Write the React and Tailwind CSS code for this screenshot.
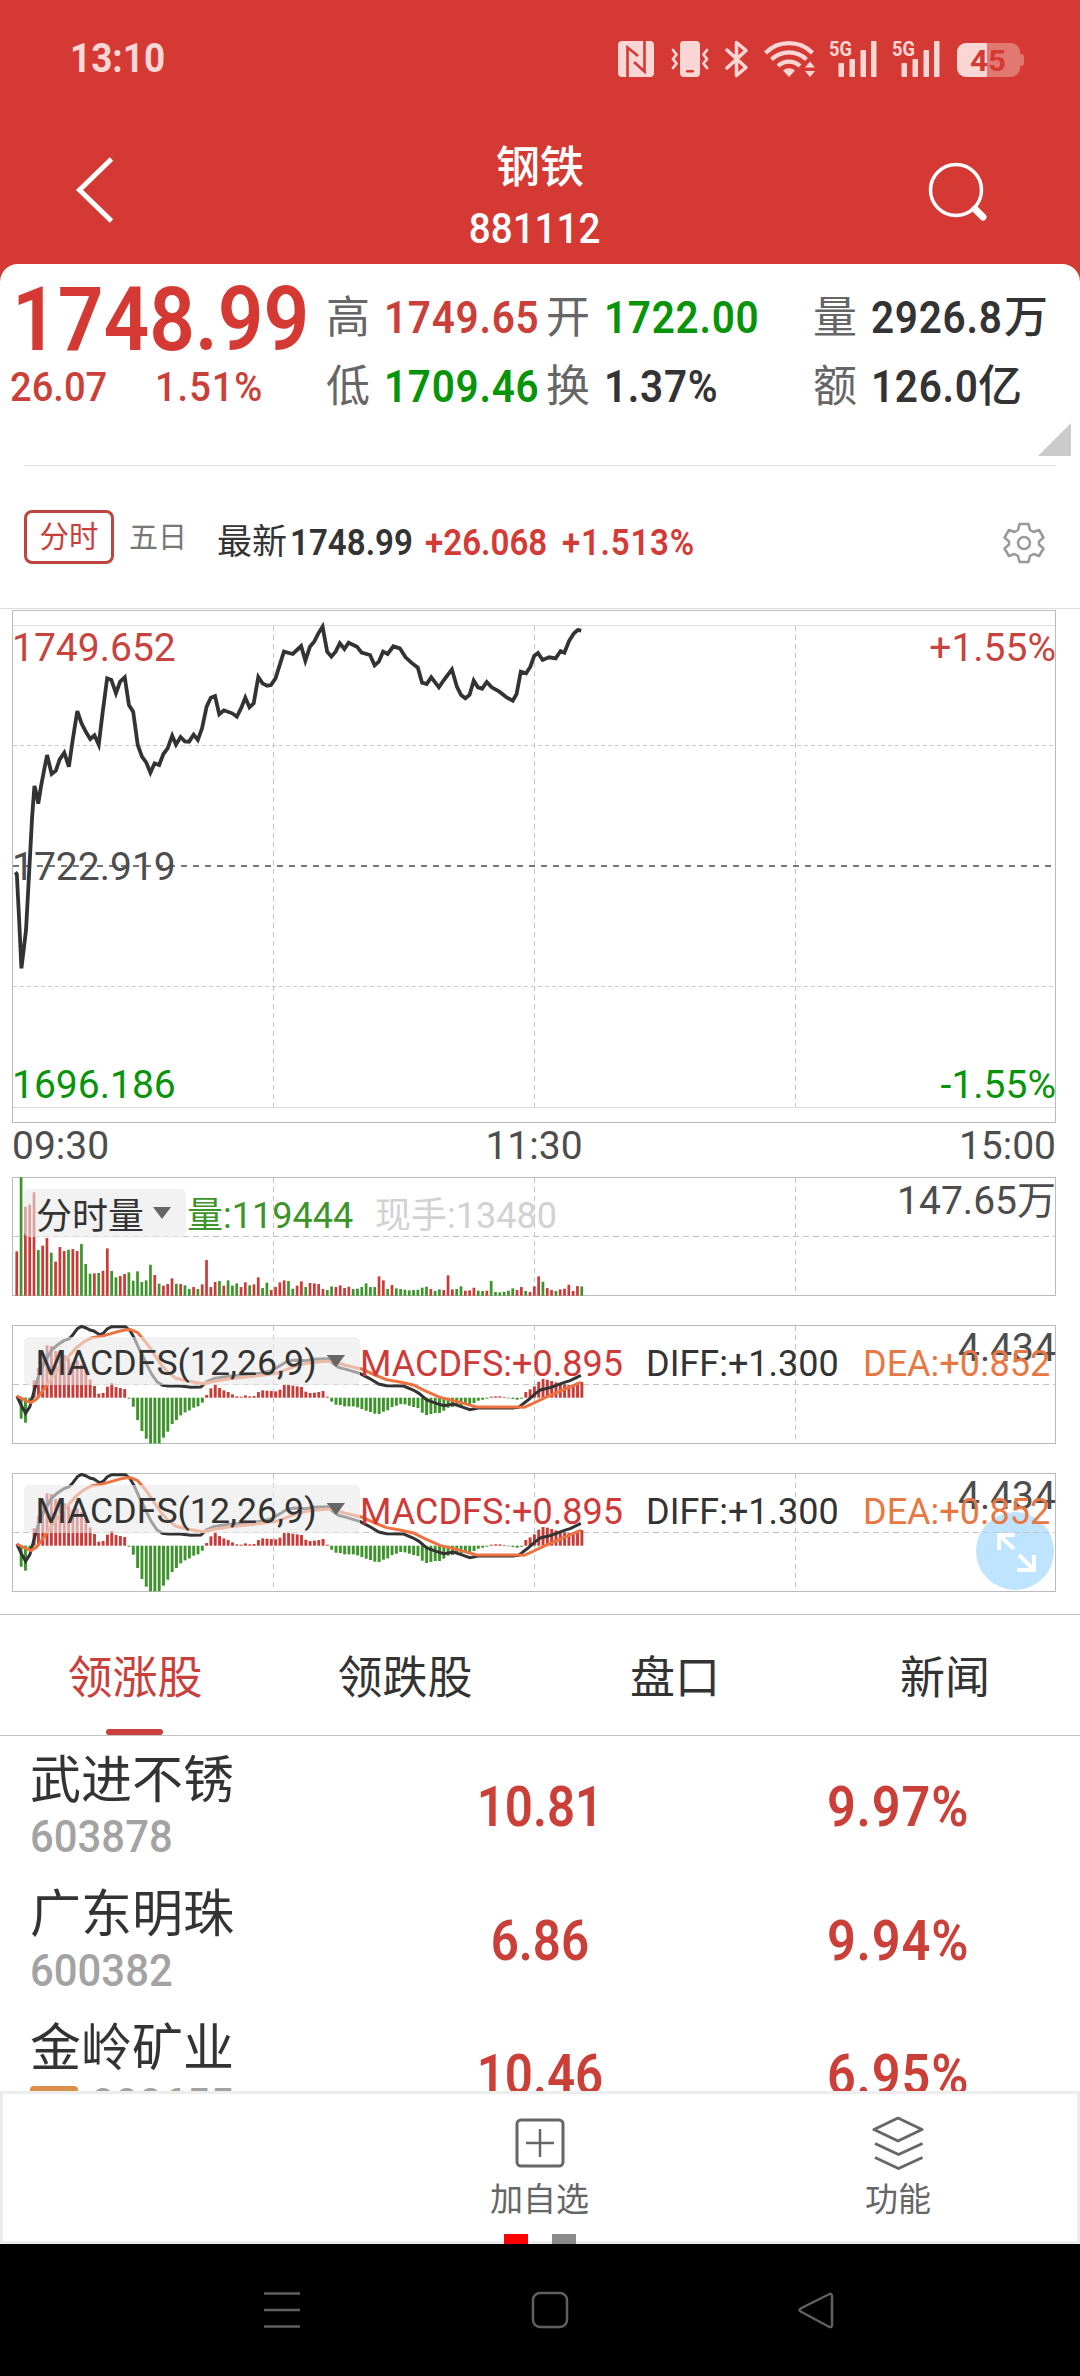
const RISE = "#cb3a37";
const FALL = "#3d942b";

// one bar per minute, negative = falling minute
const VOLUMES = [
  133, -355, 267, 273, 310, -137, 150, 173, -129, 102, 146, 134, -138, 140, 134, -155, -95, -66, 67, -68, 75, 142,
  -74, -55, 59, 65, -70, -45, -73, -41, -46, -93, 62, -36, 30, 35, 52, -36, 35, -31, -20, 26, -20, 34, 107, 26, 41,
  -44, 30, -46, -30, -37, 26, 40, -31, 34, 55, -23, -39, 17, 26, 40, 46, -44, -21, 30, 43, -26, 38, 37, 35, 20, -17,
  -28, 26, 31, 23, 27, -20, -21, -26, -37, -26, -26, 58, 46, -20, 32, -22, -20, -18, -16, -17, -18, -24, -27, 20,
  -14, -19, 17, 61, 19, -20, -28, 15, 16, 24, -15, -14, 15, -44, -11, -10, -12, -15, -22, 17, 26, -14, 11, 28, 58,
  -42, 23, 17, -14, 19, 21, 33, 14, 29, -28,
];

const HISTOGRAM = [
  0, -63, -75, -15, 52, 90, 125, 157, 155, 140, 135, 128, 118, 108, 112, 100, 85, 55, 35, 12, 14, 33, 44, 32, 29, 26,
  -3, -27, -67, -100, -123, -137, -137, -137, -120, -102, -79, -67, -53, -44, -38, -30, -26, -15, 8, 28, 39, 29, 22,
  17, 10, 4, 3, 7, 4, 5, 17, 22, 21, 20, 19, 24, 38, 38, 36, 34, 32, 18, 14, 15, 17, 20, 3, -12, -21, -22, -26, -26,
  -26, -29, -34, -39, -43, -48, -49, -42, -38, -28, -24, -19, -20, -24, -28, -31, -45, -52, -49, -46, -46, -39, -30,
  -28, -24, -24, -22, -20, -16, -9, -6, -3, 3, 4, 4, 2, -2, -4, -6, -3, 17, 25, 34, 48, 56, 54, 50, 46, 40, 40, 38,
  40, 45, 47,
];

const PRICE =
  "40,817 44,822 50,960 56,1105 68,990 76,820 84,650 90,558 95,580 100,611 107,560 123,465 135,522 146,512 156,478 168,458 180,500 190,420 202,333 213,370 225,397 236,417 247,406 258,434 268,340 280,235 291,240 303,280 314,245 326,232 337,315 348,335 360,435 371,470 382,487 393,518 404,490 416,495 427,462 438,445 450,407 460,434 472,411 483,424 494,425 506,404 517,420 528,385 540,320 551,293 562,288 573,343 585,331 607,340 619,350 630,325 641,293 652,322 663,310 675,231 686,250 698,257 708,255 720,235 742,155 765,162 776,150 787,138 798,182 810,140 821,125 832,100 843,80 855,155 866,170 877,155 888,130 900,147 911,128 933,140 945,158 967,165 979,196 990,185 1001,155 1013,162 1028,139 1045,145 1060,172 1075,188 1092,203 1103,248 1115,252 1127,232 1147,262 1160,240 1181,208 1194,260 1205,285 1216,295 1227,285 1238,242 1249,262 1260,266 1272,246 1285,262 1305,275 1325,293 1340,302 1350,282 1361,215 1375,220 1386,200 1396,168 1406,159 1418,180 1435,172 1452,175 1465,153 1475,158 1487,123 1500,100 1510,90 1519,92";

const DIFF =
  "44,708 55,735 67,760 78,740 90,690 100,650 115,610 135,570 150,555 167,542 180,537 190,525 203,505 213,499 225,504 235,510 245,513 260,524 270,520 280,507 292,500 328,500 340,512 350,532 365,570 380,605 395,640 410,665 425,676 440,678 470,678 500,682 525,681 540,665 560,655 590,650 610,647 650,645 680,640 710,632 735,615 750,604 770,600 800,602 820,598 855,596 870,610 885,622 905,628 940,640 965,655 990,672 1010,677 1055,678 1080,690 1095,700 1115,720 1140,730 1160,737 1185,732 1205,740 1228,749 1250,744 1340,744 1355,742 1380,720 1400,700 1412,690 1440,682 1475,667 1490,662 1518,646";

const DEA =
  "44,708 65,720 80,728 95,718 110,695 125,670 150,630 175,595 200,563 220,545 240,533 265,529 290,521 310,514 330,509 342,509 360,518 380,545 400,578 420,612 440,638 460,655 490,663 530,671 560,664 600,656 650,650 690,645 720,640 750,628 780,615 810,608 850,604 870,604 900,615 945,627 980,645 1010,659 1045,666 1080,675 1110,692 1150,712 1185,722 1215,731 1245,741 1345,741 1370,742 1390,732 1420,715 1450,700 1485,683 1518,667";

const STOCKS = [
  { name: "武进不锈", code: "603878", price: "10.81", change: "9.97%" },
  { name: "广东明珠", code: "600382", price: "6.86", change: "9.94%" },
  { name: "金岭矿业", code: "000655", price: "10.46", change: "6.95%", tag: true },
];

const barX = (i) => 15.4 + i * 4.313;

function StatusIcons() {
  return (
    <svg width="410" height="44" viewBox="614 37 410 44" fill="#fad7d5">
      <path
        fillRule="evenodd"
        d="M622 41h28a4 4 0 0 1 4 4v28a4 4 0 0 1-4 4h-28a4 4 0 0 1-4-4V45a4 4 0 0 1 4-4z"
      />
      <g fill="none" stroke="#d43a33" strokeWidth="2.6">
        <path d="M627.5 77V47.500L638 56M644.500 41V71.500L634 62" />
      </g>
      <rect x="680" y="41" width="20" height="36" rx="4" />
      <rect x="686" y="70" width="8" height="2.600" rx="1" fill="#d43a33" />
      <g fill="none" stroke="#fad7d5" strokeWidth="2.800" strokeLinecap="round" strokeLinejoin="round">
        <path d="M673 50l3.500 4.500-3.500 4.500 3.500 4.500-3.500 4.500M707 50l-3.500 4.500 3.500 4.500-3.500 4.500 3.500 4.500" />
        <path strokeWidth="3.500" d="M727 50l19 17.500-9.500 8V42.500l9.500 8L727 68" />
      </g>
      <g fill="none" stroke="#fad7d5" strokeWidth="4.200">
        <path d="M765.500 53a33 33 0 0 1 47 0M771.500 59.500a25 25 0 0 1 35 0M778 66a16 16 0 0 1 22 0" />
      </g>
      <path d="M783 70.500a9 9 0 0 1 12 0L789 77z" />
      <path d="M805 67.500h10l-5-6zM805 71h10l-5 6z" />
      {[0, 63].map((dx) => (
        <g key={dx} transform={`translate(${dx} 0)`}>
          <rect x="838.500" y="63" width="5.500" height="14" rx="1" />
          <rect x="849.500" y="59" width="5.500" height="18" rx="1" />
          <rect x="860.500" y="50" width="5.500" height="27" rx="1" />
          <rect x="871" y="41" width="5.500" height="36" rx="1" />
          <text x="829" y="55.500" fontSize="21" fontWeight="700" textLength="23" lengthAdjust="spacingAndGlyphs">
            5G
          </text>
        </g>
      ))}
      <rect x="957" y="43" width="63" height="34" rx="9" fill="#e27872" />
      <path d="M1020 54c4 0 4 1 4 6s0 6-4 6z" fill="#e27872" />
      <path d="M966 43h21v34h-21a9 9 0 0 1-9-9V52a9 9 0 0 1 9-9z" />
      <text x="970" y="71" fontSize="30" fontWeight="700" fill="#d43a33" textLength="36" lengthAdjust="spacingAndGlyphs">
        45
      </text>
    </svg>
  );
}

function Header() {
  return (
    <header className="h-[264px] text-white">
      <div className="flex h-[117px] items-center justify-between pl-[70px] pr-[56px]">
        <span className="inline-block origin-left scale-x-[0.9] text-[41px] font-bold leading-none text-[#fad7d4]">
          13:10
        </span>
        <StatusIcons />
      </div>
      <div className="flex h-[147px] justify-between pl-[74px] pr-[92px]">
        <svg className="mt-[37px]" width="42" height="72" viewBox="74 154 42 72" fill="none" stroke="white" strokeWidth="5">
          <path d="M111.500 159L79.500 190l32 31" />
        </svg>
        <div className="ml-[38px] flex flex-col items-center pt-[29px]">
          <h1 className="text-[44px] font-medium leading-[44px]">钢铁</h1>
          <span className="mr-[11px] mt-[18px] inline-block scale-x-[0.92] text-[42px] font-medium leading-[42px]">
            881112
          </span>
        </div>
        <svg className="mt-[41px]" width="62" height="66" viewBox="926 158 62 66" fill="none" stroke="white">
          <circle cx="956" cy="190" r="25.500" strokeWidth="3.500" />
          <path d="M975 209l8 8" strokeWidth="7" strokeLinecap="round" />
        </svg>
      </div>
    </header>
  );
}

function Stat({ label, value, unit, color }) {
  return (
    <div className="flex h-[69px] items-center text-[44px] leading-none">
      <span className="w-[58px] shrink-0 text-[#666]">{label}</span>
      <span
        className={`inline-block shrink-0 origin-left scale-x-[0.92] whitespace-nowrap font-semibold tracking-[0.800px] ${color}`}
      >
        {value}
      </span>
      {unit && <span className={`-ml-[10px] font-medium ${color}`}>{unit}</span>}
    </div>
  );
}

function Quote() {
  return (
    <section className="flex h-[202px] pt-[19px]">
      <div className="w-[326px] text-[#cb3f39]">
        <div className="ml-[12px] h-[72px] origin-left scale-x-[0.9] whitespace-nowrap text-[89px] font-semibold leading-[74px] text-[#d43a33]">
          1748.99
        </div>
        <div className="flex h-[64px] items-center pl-[10px] text-[41px] font-medium leading-none">
          <span className="w-[145px] origin-left scale-x-[0.93]">26.07</span>
          <span className="origin-left scale-x-[0.93] tracking-[1px]">1.51%</span>
        </div>
      </div>
      <div className="w-[220px]">
        <Stat label="高" value="1749.65" color="text-[#cb3f39]" />
        <Stat label="低" value="1709.46" color="text-[#089408]" />
      </div>
      <div className="w-[267px]">
        <Stat label="开" value="1722.00" color="text-[#089408]" />
        <Stat label="换" value="1.37%" color="text-[#333]" />
      </div>
      <div className="flex-1">
        <Stat label="量" value="2926.8" unit="万" color="text-[#333]" />
        <Stat label="额" value="126.0" unit="亿" color="text-[#333]" />
      </div>
      <svg className="-ml-[42px] mr-[9px] mt-[140px]" width="33" height="33" viewBox="0 0 33 33">
        <path d="M33 0v33H0z" fill="#ccc" />
      </svg>
    </section>
  );
}

function PeriodBar() {
  return (
    <section className="mx-6 flex h-[143px] items-center border-t border-[#ddd] text-[36px] leading-none">
      <button className="h-[54px] w-[90px] rounded-[8px] border-[3px] border-[#bf4440] pt-px text-[29.500px] leading-none text-[#c9403b]">
        分时
      </button>
      <span className="ml-[15px] w-[88px] pt-[2px] text-[29px] text-[#777]">五日</span>
      <div className="flex flex-1 items-center pt-[11px]">
        <span className="w-[73px] text-[35px] text-[#333]">最新</span>
        <span className="w-[135px] origin-left scale-x-[0.92] font-semibold text-[#333]">1748.99</span>
        <span className="w-[137px] origin-left scale-x-[0.92] font-semibold text-[#d43a36]">+26.068</span>
        <span className="origin-left scale-x-[0.92] font-semibold tracking-[0.800px] text-[#d43a36]">+1.513%</span>
        <svg className="ml-auto mr-[10px]" width="44" height="44" viewBox="-22 -22 44 44" fill="none" stroke="#999" strokeWidth="2.500" strokeLinejoin="round">
          <circle r="6" />
          <path d="M-4.500-19h9l1.500 6 3.500 2 5.500-2 4.500 7.500-4.500 4v3l4.500 4-4.500 7.500-5.500-2-3.500 2-1.500 6h-9l-1.500-6-3.500-2-5.500 2-4.500-7.500 4.500-4v-3l-4.500-4 4.500-7.500 5.500 2 3.500-2z" />
        </svg>
      </div>
    </section>
  );
}

function PriceChart() {
  return (
    <svg className="block border-t border-[#ddd]" width="1080" height="562" viewBox="0 609 1080 561" fontSize="39" fill="#4d4d4d">
      <g fill="none" stroke="#bbb">
        <rect x="12.500" y="610.500" width="1043" height="512" />
        <path d="M13 625.500h1042M13 1107.500h1042" stroke="#ddd" />
        <path d="M13 745.500h1042M13 986.500h1042" stroke="#ccc" strokeDasharray="4 3" />
        <path d="M273.500 626v481M534.500 626v481M795.500 626v481" stroke="#c4c4c4" strokeDasharray="5 4" />
        <path d="M13 866h1042" stroke="#777" strokeWidth="2" strokeDasharray="6 6" />
      </g>
      <text x="12" y="661" fill="#c7433e">1749.652</text>
      <text x="12" y="880">1722.919</text>
      <text x="12" y="1098" fill="#089408">1696.186</text>
      <text x="1056" y="661" fill="#c7433e" textAnchor="end">+1.55%</text>
      <text x="1056" y="1098" fill="#089408" textAnchor="end">-1.55%</text>
      <polyline
        transform="translate(0 600) scale(.38265 .33333)"
        points={PRICE}
        fill="none"
        stroke="#333"
        strokeWidth="3.800"
        vectorEffect="non-scaling-stroke"
      />
      <text x="12" y="1159">09:30</text>
      <text x="534" y="1159" textAnchor="middle">11:30</text>
      <text x="1056" y="1159" textAnchor="end">15:00</text>
    </svg>
  );
}

function PanelFrame() {
  return (
    <g fill="none" stroke="#bbb">
      <rect x="12.500" y="7.500" width="1043" height="118" />
      <path d="M13 66.500h1042" stroke="#c4c4c4" strokeDasharray="6 4" />
      <path d="M273.500 8v117M534.500 8v117M795.500 8v117" stroke="#c4c4c4" strokeDasharray="5 4" />
    </g>
  );
}

function VolumeChart() {
  return (
    <svg className="block" width="1080" height="148" viewBox="0 0 1080 148" fontSize="36" fill="#333">
      <PanelFrame />
      {VOLUMES.map((v, i) => (
        <rect
          key={i}
          x={barX(i)}
          y={125.7 - Math.abs(v) / 3}
          width="2.700"
          height={Math.abs(v) / 3}
          fill={v > 0 ? RISE : FALL}
        />
      ))}
      <rect x="24" y="19" width="162" height="48" rx="5" fill="#e9e9e9" fillOpacity="0.6" />
      <text x="36" y="59" fontSize="36">分时量</text>
      <path d="M153 37h18l-9 12z" fill="#666" />
      <text x="187" y="58" fill="#3d942b">量:119444</text>
      <text x="375" y="58" fill="#d2d2d2">现手:13480</text>
      <text x="1056" y="44" fontSize="39" fill="#4d4d4d" textAnchor="end">147.65万</text>
    </svg>
  );
}

function MacdChart({ expand }) {
  return (
    <svg className="block" width="1080" height="148" viewBox="0 0 1080 148" fontSize="36" fill="#333">
      {expand && <circle cx="1015" cy="85" r="39" fill="#bfe4ff" />}
      <PanelFrame />
      {HISTOGRAM.map((v, i) => (
        <rect
          key={i}
          x={barX(i)}
          y={v > 0 ? 79.7 - v / 3 : 79.7}
          width="2.900"
          height={Math.abs(v) / 3}
          fill={v > 0 ? RISE : FALL}
        />
      ))}
      <g transform="translate(0 -158) scale(.38265 .33333)" fill="none" strokeWidth="3">
        <polyline points={DIFF} stroke="#333" vectorEffect="non-scaling-stroke" />
        <polyline points={DEA} stroke="#ee7140" vectorEffect="non-scaling-stroke" />
      </g>
      <rect x="24" y="19" width="336" height="48" rx="5" fill="#e9e9e9" fillOpacity="0.6" />
      <text x="35.500" y="57" fontSize="35.700">MACDFS(12,26,9)</text>
      <path d="M326.500 37h18.500l-9 12z" fill="#666" />
      <text x="958" y="43" fontSize="39" fill="#4d4d4d">4.434</text>
      <text x="360" y="58" fill="#cf3a38">MACDFS:+0.895</text>
      <text x="646" y="58">DIFF:+1.300</text>
      <text x="863" y="58" fill="#e87843">DEA:+0.852</text>
      {expand && (
        <g fill="none" stroke="#fff" strokeWidth="4">
          <path d="M1015 69h-16v15M999 69l15 14M1017 104h17V89M1034 104l-15-15" />
        </g>
      )}
    </svg>
  );
}

function Tabs() {
  return (
    <nav className="flex h-[122px] border-y border-[#c4c4c4] text-[45px] text-[#333]">
      <div className="relative flex w-[270px] items-center justify-center pt-[7px] text-[#c9403b]">
        领涨股
        <span className="absolute bottom-0 left-[106px] h-[6px] w-[57px] rounded-[3px] bg-[#c9403b]" />
      </div>
      <div className="flex w-[270px] items-center justify-center pt-[7px]">领跌股</div>
      <div className="flex w-[270px] items-center justify-center pt-[7px]">盘口</div>
      <div className="flex w-[270px] items-center justify-center pt-[7px]">新闻</div>
    </nav>
  );
}

function StockRow({ stock }) {
  return (
    <li className="flex h-[134px] items-center pt-[7px]">
      <div className="w-[405px] pl-[30px]">
        <div className="text-[51px] leading-[51px] text-[#333]">{stock.name}</div>
        <div className="mt-[8px] flex h-[45px] items-center leading-none">
          {stock.tag && <span className="mr-[13px] h-[36px] w-[48px] rounded-[4px] bg-[#dc8f4b]" />}
          <span className="inline-block origin-left scale-x-[0.93] text-[45px] font-medium text-[#a3a3a3]">
            {stock.code}
          </span>
        </div>
      </div>
      <div className="flex w-[270px] justify-center text-[56px] font-semibold leading-none text-[#cb3f39]">
        <span className="inline-block scale-x-[0.88]">{stock.price}</span>
      </div>
      <div className="flex flex-1 justify-center pl-[42px] text-[56px] font-semibold leading-none text-[#cb3f39]">
        <span className="inline-block scale-x-[0.9] tracking-[1px]">{stock.change}</span>
      </div>
    </li>
  );
}

function ActionBar() {
  return (
    <footer className="relative flex h-[153px] border-[3px] border-[#ededed] bg-white text-[33px] leading-none text-[#666]">
      <div className="w-[357px]" />
      <button className="flex w-[359px] flex-col items-center pt-[24px]">
        <svg width="50" height="50" viewBox="0 0 50 50" fill="none" stroke="#666" strokeWidth="3">
          <rect x="2" y="2" width="46" height="46" rx="4" />
          <path d="M25 11v28M11 25h28" strokeWidth="2.500" />
        </svg>
        <span className="mt-[15px]">加自选</span>
      </button>
      <button className="flex flex-1 flex-col items-center pt-[21px]">
        <svg width="52" height="56" viewBox="873 2115 52 56" fill="none" stroke="#666" strokeWidth="3" strokeLinejoin="round">
          <path d="M899 2118l24 11.500-24 11.500-24-11.500zM876 2143.500l23.500 11 24-11M876 2157.500l23.500 11 24-11" />
        </svg>
        <span className="mt-[12px]">功能</span>
      </button>
      <span className="absolute -bottom-[3px] left-[501px] h-[10px] w-6 bg-[#f00]" />
      <span className="absolute -bottom-[3px] left-[549px] h-[10px] w-6 bg-[#8a8a8a]" />
    </footer>
  );
}

function SystemNav() {
  return (
    <div className="h-[132px] bg-black">
      <svg width="1080" height="132" viewBox="0 2244 1080 132" fill="none" stroke="#606060" strokeWidth="2.500">
        <path d="M264 2293.500h36M264 2310h36M264 2326.500h36" />
        <rect x="533" y="2293" width="34" height="34" rx="7" />
        <path d="M828.500 2294.500l-27 13.500q-4 2 0 4l27 14.500q3.500 2 3.500-2v-28q0-4-3.500-2z" />
      </svg>
    </div>
  );
}

export default function App() {
  return (
    <div className="flex h-[2376px] w-[1080px] flex-col overflow-hidden bg-[#d43a33] font-[Roboto,'Noto_Sans_CJK_SC',sans-serif]">
      <Header />
      <main className="h-[1827px] overflow-hidden rounded-t-[18px] bg-white">
        <Quote />
        <div className="-mt-px">
          <PeriodBar />
        </div>
        <PriceChart />
        <VolumeChart />
        <MacdChart />
        <MacdChart expand />
        <Tabs />
        <ul>
          {STOCKS.map((stock) => (
            <StockRow key={stock.code} stock={stock} />
          ))}
        </ul>
      </main>
      <ActionBar />
      <SystemNav />
    </div>
  );
}
